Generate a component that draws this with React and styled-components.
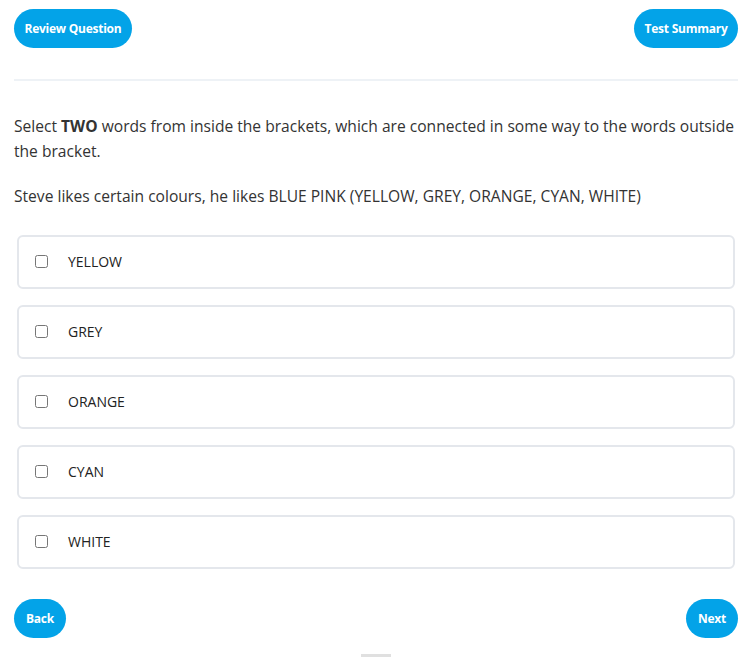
import React from 'react'
import { styled, createGlobalStyle } from 'styled-components'

const GlobalStyle = createGlobalStyle`
  html, body {
    margin: 0;
    padding: 0;
    background: #fff;
  }
  body {
    font-family: "Open Sans", "Noto Sans", sans-serif;
    color: #333;
  }
`

const options = ['YELLOW', 'GREY', 'ORANGE', 'CYAN', 'WHITE']

const App = () => {
    return (
        <>
            <GlobalStyle />
            <Page>
                <TopBar>
                    <PillButton>Review Question</PillButton>
                    <PillButton>Test Summary</PillButton>
                </TopBar>
                <Divider />
                <Question>
                    Select <strong>TWO</strong> words from inside the brackets, which are connected in some way to the words outside the bracket.
                </Question>
                <Prompt>
                    Steve likes certain colours, he likes BLUE PINK (YELLOW, GREY, ORANGE, CYAN, WHITE)
                </Prompt>
                <OptionList>
                    {options.map((opt) => (
                        <Option key={opt}>
                            <input type="checkbox" />
                            <span>{opt}</span>
                        </Option>
                    ))}
                </OptionList>
                <BottomBar>
                    <PillButton $round>Back</PillButton>
                    <PillButton $round>Next</PillButton>
                </BottomBar>
                <Handle />
            </Page>
        </>
    )
}

export default App

const Page = styled.div`
    width: 724px;
    padding: 9px 14px 0;
    display: flex;
    flex-direction: column;
`

const TopBar = styled.div`
    display: flex;
    justify-content: space-between;
    align-items: center;
`

const BottomBar = styled(TopBar)`
    margin-top: 30px;
`

const PillButton = styled.button`
    height: 39px;
    padding: ${p => p.$round ? '0 12px' : '0 10.5px'};
    border: none;
    border-radius: 20px;
    background: #03a3e8;
    color: #fff;
    font-family: "Open Sans", "Noto Sans", sans-serif;
    font-weight: 700;
    font-size: 12px;
    letter-spacing: -0.25px;
    cursor: pointer;
`

const Divider = styled.div`
    margin-top: 31px;
    height: 2px;
    background: #eef2f6;
`

const Question = styled.p`
    margin: 33px 0 0;
    font-size: 15.6px;
    line-height: 25px;
    strong {
        font-weight: 700;
    }
`

const Prompt = styled.p`
    margin: 20px 0 0;
    font-size: 15.6px;
    line-height: 25px;
`

const OptionList = styled.div`
    margin: 26px 3px 0;
    display: flex;
    flex-direction: column;
    gap: 16px;
`

const Option = styled.label`
    height: 54px;
    box-sizing: border-box;
    border: 2px solid #e4e7ec;
    border-radius: 6px;
    padding: 0 0 2px 16px;
    display: flex;
    align-items: center;
    gap: 20px;
    font-size: 14px;
    color: #222;
    input {
        margin: 0;
        width: 13px;
        height: 13px;
    }
`

const Handle = styled.div`
    align-self: center;
    margin: 16px 0 9px;
    width: 30px;
    height: 3px;
    background: #e0e0e0;
`
